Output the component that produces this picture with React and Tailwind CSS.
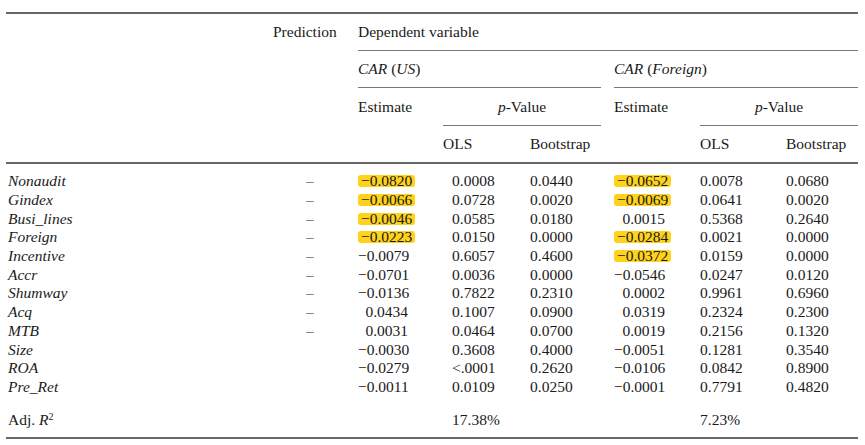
import React from "react";

const rows = [
  ["Nonaudit", "–", "−0.0820", "0.0008", "0.0440", "−0.0652", "0.0078", "0.0680", true, true],
  ["Gindex", "–", "−0.0066", "0.0728", "0.0020", "−0.0069", "0.0641", "0.0020", true, true],
  ["Busi_lines", "–", "−0.0046", "0.0585", "0.0180", "0.0015", "0.5368", "0.2640", true, false],
  ["Foreign", "–", "−0.0223", "0.0150", "0.0000", "−0.0284", "0.0021", "0.0000", true, true],
  ["Incentive", "–", "−0.0079", "0.6057", "0.4600", "−0.0372", "0.0159", "0.0000", false, true],
  ["Accr", "–", "−0.0701", "0.0036", "0.0000", "−0.0546", "0.0247", "0.0120"],
  ["Shumway", "–", "−0.0136", "0.7822", "0.2310", "0.0002", "0.9961", "0.6960"],
  ["Acq", "–", "0.0434", "0.1007", "0.0900", "0.0319", "0.2324", "0.2300"],
  ["MTB", "–", "0.0031", "0.0464", "0.0700", "0.0019", "0.2156", "0.1320"],
  ["Size", "", "−0.0030", "0.3608", "0.4000", "−0.0051", "0.1281", "0.3540"],
  ["ROA", "", "−0.0279", "<.0001", "0.2620", "−0.0106", "0.0842", "0.8900"],
  ["Pre_Ret", "", "−0.0011", "0.0109", "0.0250", "−0.0001", "0.7791", "0.4820"],
];

const Mark = ({ on, children }) =>
  on ? (
    <span className="inline-block bg-[#ffd21c] rounded-[3px] px-[3px] -mr-[3px] leading-[12px]">
      {children}
    </span>
  ) : (
    <span>{children}</span>
  );

const Rule = ({ className = "" }) => <div className={"h-px bg-[#777] " + className} />;

const App = () => {
  return (
    <div
      className="w-[865px] h-[445px] bg-white text-[#1a1a1a] text-[15.5px] leading-none"
      style={{ fontFamily: '"Liberation Serif", "Times New Roman", serif' }}
    >
      <div className="pt-[12px] pl-[6px] w-[858px]">
        <div className="h-[1.5px] bg-[#666]" />

        {/* header row 1 */}
        <div className="flex h-[36px] items-center">
          <div className="w-[267px]" />
          <div className="w-[85px]">Prediction</div>
          <div>Dependent variable</div>
        </div>
        <div className="flex">
          <div className="w-[352px]" />
          <Rule className="flex-1" />
        </div>

        {/* header row 2 */}
        <div className="flex h-[36.5px] items-center">
          <div className="w-[352px]" />
          <div className="w-[256px]">
            <i>CAR</i> (<i>US</i>)
          </div>
          <div>
            <i>CAR</i> (<i>Foreign</i>)
          </div>
        </div>
        <div className="flex">
          <div className="w-[352px]" />
          <Rule className="w-[243px]" />
          <div className="w-[13px]" />
          <Rule className="flex-1" />
        </div>

        {/* header row 3 */}
        <div className="flex h-[36.5px] items-center">
          <div className="w-[352px]" />
          <div className="w-[85px]">Estimate</div>
          <div className="w-[158px] text-center">
            <i>p</i>-Value
          </div>
          <div className="w-[13px]" />
          <div className="w-[86px]">Estimate</div>
          <div className="flex-1 text-center">
            <i>p</i>-Value
          </div>
        </div>
        <div className="flex">
          <div className="w-[437px]" />
          <Rule className="w-[158px]" />
          <div className="w-[99px]" />
          <Rule className="flex-1" />
        </div>

        {/* header row 4 */}
        <div className="flex h-[36.5px] items-center">
          <div className="w-[437px]" />
          <div className="w-[87px]">OLS</div>
          <div className="w-[170px]">Bootstrap</div>
          <div className="w-[86px]">OLS</div>
          <div>Bootstrap</div>
        </div>
        <div className="h-[1.5px] bg-[#666]" />

        {/* body */}
        <div className="pt-[8px]">
          {rows.map((r) => (
            <div key={r[0]} className="flex h-[18.72px] items-center">
              <div className="w-[267px] pl-[2px] italic">{r[0]}</div>
              <div className="w-[85px] pl-[33px]">{r[1]}</div>
              <div className="w-[85px] pr-[35px] text-right">
                <Mark on={r[8]}>{r[2]}</Mark>
              </div>
              <div className="w-[87px] pl-[9px]">{r[3]}</div>
              <div className="w-[84px]">{r[4]}</div>
              <div className="w-[86px] pr-[35px] text-right">
                <Mark on={r[9]}>{r[5]}</Mark>
              </div>
              <div className="w-[86px]">{r[6]}</div>
              <div className="flex-1">{r[7]}</div>
            </div>
          ))}
          <div className="flex h-[18.72px] items-center mt-[14px]">
            <div className="w-[437px] pl-[2px]">
              Adj. <i>R</i>
              <sup className="text-[10px]">2</sup>
            </div>
            <div className="w-[257px] pl-[9px]">17.38%</div>
            <div>7.23%</div>
          </div>
        </div>
        <div className="h-[2px] bg-[#6a6a6a] mt-[8px]" />
      </div>
    </div>
  );
};

export default App;
